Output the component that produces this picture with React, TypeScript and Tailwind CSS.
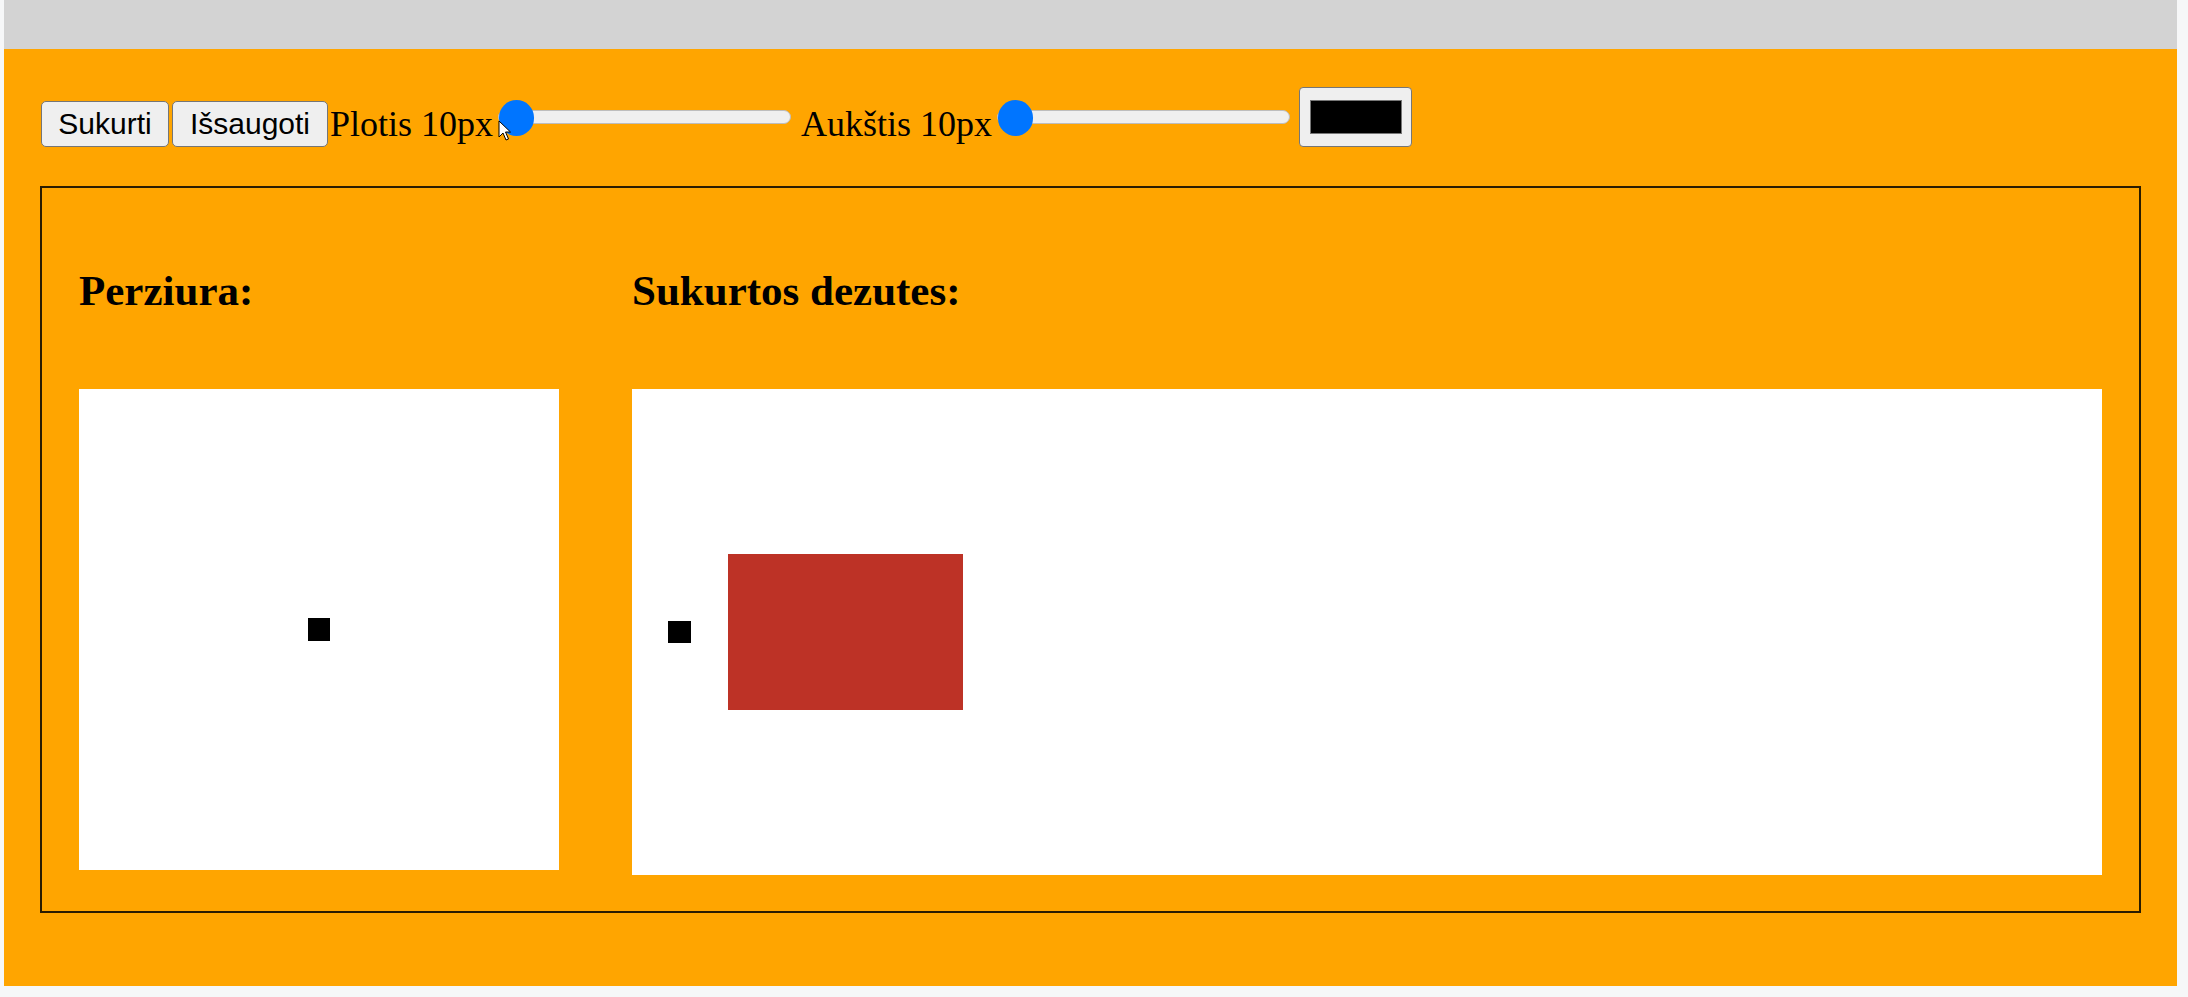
import React, { useState } from 'react';

// the page in the reference is shown at 225% zoom
const ZOOM = 2.25;

const savedBoxes = [
  { id: 1, w: 10.2, h: 10.2, color: '#000000' },
  { id: 2, w: 104.5, h: 69.3, color: '#bd3226' },
];

const Slider = ({ value, onChange }: { value: number; onChange: (v: number) => void }) => (
  <input
    type="range"
    min={10}
    max={200}
    value={value}
    onChange={(e) => onChange(Number(e.target.value))}
    className="mx-[5px] mt-[12px] h-[36px] w-[293px] cursor-pointer appearance-none bg-transparent [&::-webkit-slider-runnable-track]:h-[14px] [&::-webkit-slider-runnable-track]:rounded-full [&::-webkit-slider-runnable-track]:border [&::-webkit-slider-runnable-track]:border-[#bdbdbd] [&::-webkit-slider-runnable-track]:bg-[#efefef] [&::-webkit-slider-thumb]:mt-[-11px] [&::-webkit-slider-thumb]:h-[36px] [&::-webkit-slider-thumb]:w-[35px] [&::-webkit-slider-thumb]:appearance-none [&::-webkit-slider-thumb]:rounded-full [&::-webkit-slider-thumb]:bg-[#0075ff]"
  />
);

const App = () => {
  const [width, setWidth] = useState(10);
  const [height, setHeight] = useState(10);
  const [boxes] = useState(savedBoxes);

  return (
    <div className="relative min-h-[997px] w-full bg-[#f6f7f8] pb-[11px] pl-[4px] pr-[11px] text-black [font-family:'Liberation_Serif',serif]">
      <div className="h-[49px] bg-[#d3d3d3]" />

      <div className="bg-[#ffa500] px-[36px] pb-[73px] pt-[38px]">
        {/* toolbar */}
        <div className="flex items-start pl-[1px]">
          <button className="mt-[14px] h-[46px] w-[128px] rounded-[5px] border border-[#767676] bg-[#efefef] text-[30px] leading-none [font-family:'Liberation_Sans',Arial,sans-serif]">
            Sukurti
          </button>
          <button className="ml-[3px] mt-[14px] h-[46px] w-[156px] rounded-[5px] border border-[#767676] bg-[#efefef] text-[30px] leading-none [font-family:'Liberation_Sans',Arial,sans-serif]">
            Išsaugoti
          </button>
          <span className="ml-[2px] mt-[17px] text-[36px] leading-[41px]">Plotis {width}px</span>
          <Slider value={width} onChange={setWidth} />
          <span className="ml-[5px] mt-[17px] text-[36px] leading-[41px]">Aukštis {height}px</span>
          <Slider value={height} onChange={setHeight} />
          <div className="ml-[4px] flex h-[60px] w-[113px] items-center justify-center rounded-[4px] border border-[#767676] bg-[#efefef]">
            <div className="h-[34px] w-[92px] border border-[#777777] bg-black" />
          </div>
        </div>

        {/* main frame */}
        <div className="mt-[39px] flex items-start gap-[73px] border-2 border-[#2a1c00] px-[37px] pb-[36px] pt-[37px]">
          <div className="w-[480px]">
            <h3 className="mt-[43px] h-[46px] text-[43px] font-bold leading-[46px]">Perziura:</h3>
            <div className="mt-[75px] flex h-[481px] items-center justify-center bg-white">
              <div style={{ width: width * ZOOM, height: height * ZOOM }} className="bg-black" />
            </div>
          </div>

          <div className="flex-1">
            <h3 className="mt-[43px] h-[46px] text-[43px] font-bold leading-[46px]">Sukurtos dezutes:</h3>
            <div className="mt-[75px] flex h-[486px] items-center gap-[37px] bg-white pl-[36px]">
              {boxes.map(({ id, w, h, color }) => (
                <div key={id} style={{ width: w * ZOOM, height: h * ZOOM, backgroundColor: color }} />
              ))}
            </div>
          </div>
        </div>
      </div>

      {/* mouse pointer from the screenshot */}
      <svg className="absolute left-[498px] top-[120px]" width="14" height="21" viewBox="0 0 14 21">
        <path d="M1 1 L1 17 L5 13 L8 20 L10.5 19 L7.5 12 L12.5 12 Z" fill="white" stroke="black" strokeWidth="1" strokeLinejoin="round" />
      </svg>
    </div>
  );
};

export default App;
